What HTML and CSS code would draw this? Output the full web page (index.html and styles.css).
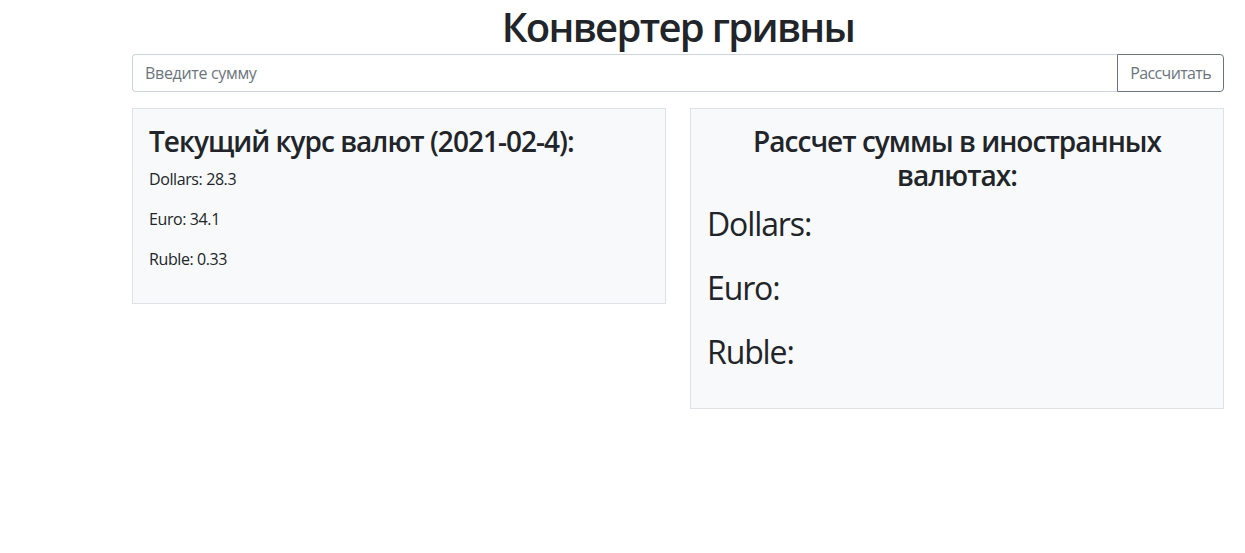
FILE: index.html
```html
<!DOCTYPE html>
<html lang="ru">
<head>
<meta charset="utf-8">
<title>Конвертер гривны</title>
<link rel="stylesheet" href="styles.css">
</head>
<body>
<div class="page">
  <h1 class="title">Конвертер гривны</h1>
  <div class="input-group">
    <input class="amount" type="text" placeholder="Введите сумму">
    <button class="calc" type="button">Рассчитать</button>
  </div>
  <div class="cards">
    <div class="card">
      <h3 class="card-title">Текущий курс валют (2021-02-4):</h3>
      <p class="rate">Dollars: 28.3</p>
      <p class="rate">Euro: 34.1</p>
      <p class="rate">Ruble: 0.33</p>
    </div>
    <div class="card">
      <h3 class="card-title center">Рассчет суммы в иностранных валютах:</h3>
      <p class="result">Dollars:</p>
      <p class="result">Euro:</p>
      <p class="result">Ruble:</p>
    </div>
  </div>
</div>
</body>
</html>
```

FILE: styles.css
```css
* { box-sizing: border-box; }
html, body {
  margin: 0;
  padding: 0;
  background: #fff;
}
body {
  font-family: "Open Sans", "Noto Sans", sans-serif;
  font-size: 16px;
  line-height: 1.5;
  color: #212529;
  letter-spacing: -0.025em;
}
.page {
  width: 1092px;
  margin-left: 132px;
}
.title {
  margin: 0;
  font-size: 40px;
  font-weight: 600;
  line-height: 54px;
  letter-spacing: -0.042em;
  text-align: center;
}
.input-group {
  display: flex;
  height: 38px;
}
.amount {
  flex: 1;
  min-width: 0;
  height: 38px;
  padding: 6px 12px;
  font: inherit;
  letter-spacing: -0.02em;
  color: #495057;
  border: 1px solid #ced4da;
  border-right: none;
  border-radius: 4px 0 0 4px;
  background: #fff;
  outline: none;
}
.amount::placeholder { color: #6c757d; opacity: 1; }
.calc {
  height: 38px;
  padding: 6px 12px;
  font: inherit;
  letter-spacing: -0.04em;
  color: #6c757d;
  background: #fff;
  border: 1px solid #6c757d;
  border-radius: 0 4px 4px 0;
  cursor: pointer;
}
.cards {
  margin-top: 16px;
  display: grid;
  grid-template-columns: 1fr 1fr;
  gap: 24px;
  align-items: start;
}
.card {
  background: #f8f9fa;
  border: 1px solid #dee2e6;
  padding: 16px;
}
.card-title {
  margin: 0 0 8px;
  font-size: 28px;
  font-weight: 600;
  line-height: 1.2;
  letter-spacing: -0.035em;
}
.center { text-align: center; }
.rate {
  margin: 0 0 16px;
  font-size: 16px;
  line-height: 24px;
}
.result {
  margin: 0 0 16px;
  font-size: 32px;
  line-height: 48px;
  letter-spacing: -0.035em;
}
```
